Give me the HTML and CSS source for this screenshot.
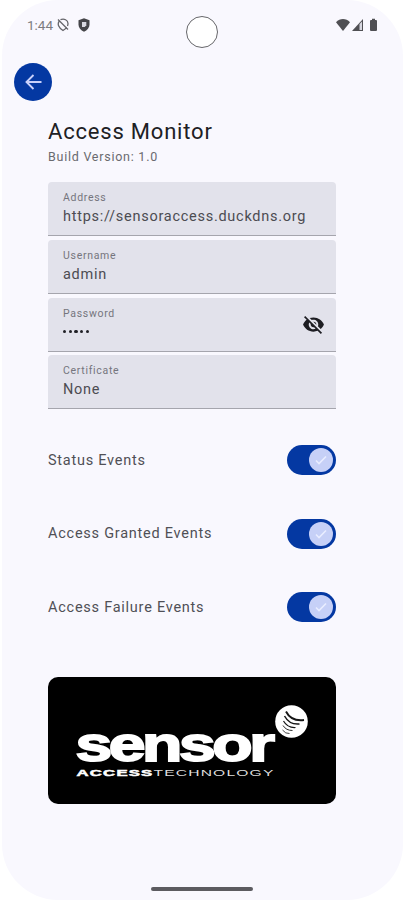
FILE: index.html
```html
<!DOCTYPE html>
<html lang="en">
<head>
<meta charset="utf-8">
<title>Access Monitor</title>
<link rel="stylesheet" href="styles.css">
</head>
<body>
<div class="phone">
  <header class="status">
    <span class="time">1:44</span>
    <svg class="st-loc" width="12" height="14" viewBox="0 0 12 14" fill="none" stroke="#66666b" stroke-width="1.300"><path d="M2.200 3.200C.2 6 1.300 9.500 6 12.500c2-1.200 3-2.200 3.700-3.500M3.500 1.700C7 .2 11 2 11 5.600c0 .8-.2 1.500-.5 2.300M1 1.500l10 10"/></svg>
    <svg class="st-shield" width="12" height="14" viewBox="0 0 12 14"><path fill="#454549" d="M6 .3l5.500 2v4.200c0 3.200-2.200 5.800-5.500 7.200C2.700 12.300.5 9.700.5 6.500V2.300z"/><path fill="#d8d8e0" d="M4 4h4.300v3.200L6.800 9H4z"/></svg>
    <span class="camera"></span>
    <svg class="st-right" width="43" height="14" viewBox="0 0 43 14" fill="#505054"><path d="M0 4.300C4-.1 10-.1 14 4.300L7 13z"/><path d="M16 13L27 1v12z"/><path fill="#d6d6df" d="M23.500 6l2.500-2.500V12h-2.500z"/><path d="M34 3q0-1 1-1h1V.7h3V2h1q1 0 1 1v9q0 1-1 1h-5q-1 0-1-1z"/></svg>
  </header>
  <button class="back" aria-label="Back"><svg width="17" height="16" viewBox="0 0 17 16" fill="none" stroke="#c8d0fa" stroke-width="1.900"><path d="M16.500 8H2M8.500 1L1.500 8l7 7"/></svg></button>
  <main>
    <h1>Access Monitor</h1>
    <p class="build">Build Version: 1.0</p>
    <section class="fields">
      <div class="field"><label>Address</label><div class="value url">https://sensoraccess.duckdns.org</div></div>
      <div class="field"><label>Username</label><div class="value">admin</div></div>
      <div class="field"><label>Password</label><div class="value dots"><i></i><i></i><i></i><i></i><i></i></div>
        <svg class="eye" width="21" height="19" viewBox="1 2 22 20" fill="#1d1d22"><path d="M12 7c2.760 0 5 2.240 5 5 0 .650-.130 1.260-.360 1.830l2.920 2.920c1.510-1.260 2.700-2.890 3.430-4.750-1.730-4.390-6-7.500-11-7.500-1.400 0-2.740.250-3.980.7l2.160 2.160C10.740 7.130 11.350 7 12 7zM2 4.270l2.280 2.280.46.46C3.080 8.300 1.780 10.020 1 12c1.730 4.390 6 7.500 11 7.500 1.550 0 3.030-.3 4.380-.84l.42.42L19.730 22 21 20.730 3.270 3 2 4.270zM7.530 9.800l1.550 1.550c-.05.21-.08.43-.08.65 0 1.660 1.340 3 3 3 .22 0 .44-.03.65-.08l1.550 1.550c-.67.33-1.410.53-2.200.53-2.760 0-5-2.240-5-5 0-.79.2-1.530.53-2.200zm4.310-.78l3.150 3.150.02-.16c0-1.660-1.340-3-3-3l-.17.010z"/></svg></div>
      <div class="field"><label>Certificate</label><div class="value">None</div></div>
    </section>
    <section class="switches">
      <div class="row"><span>Status Events</span><span class="switch"><span class="thumb"><svg width="12" height="10" viewBox="0 0 12 10"><path d="M1 5.500l3 3 7-7"/></svg></span></span></div>
      <div class="row"><span>Access Granted Events</span><span class="switch"><span class="thumb"><svg width="12" height="10" viewBox="0 0 12 10"><path d="M1 5.500l3 3 7-7"/></svg></span></span></div>
      <div class="row"><span>Access Failure Events</span><span class="switch"><span class="thumb"><svg width="12" height="10" viewBox="0 0 12 10"><path d="M1 5.500l3 3 7-7"/></svg></span></span></div>
    </section>
    <svg class="brand" width="288" height="127" viewBox="0 0 288 127">
      <rect width="288" height="127" rx="10"/>
      <text class="wordmark" x="27.500" y="83.500" textLength="196" lengthAdjust="spacingAndGlyphs">sensor</text>
      <text class="tag heavy" x="28.500" y="98.500" textLength="77" lengthAdjust="spacingAndGlyphs">ACCESS</text>
      <text class="tag light" x="105.500" y="98.500" textLength="121" lengthAdjust="spacingAndGlyphs">TECHNOLOGY</text>
      <circle cx="243.500" cy="44.500" r="16.300" fill="#fff"/>
      <g fill="none" stroke="#161616"><path stroke-width="1.900" d="M238 34.500q5 10 18 8.500"/><path stroke-width="1.500" d="M236.500 39q5 9 15 8"/><path stroke-width="1.200" d="M235.500 44q4 7 12 6.500"/><path stroke-width=".9" d="M235 48.500q3 5 9.500 5"/><path stroke-width=".8" d="M234.500 53q3 4 7 3.500"/></g>
    </svg>
  </main>
  <div class="home"></div>
</div>
</body>
</html>
```
FILE: styles.css
```css
* { box-sizing: border-box; }
body { margin: 0; background: #fff; font-family: Roboto, sans-serif; }
.phone { position: relative; width: 401px; height: 900px; margin-left: 2px; padding-left: 46px; background: #f9f8fe; border-radius: 56px; overflow: hidden; }
.status { height: 63px; margin-left: -46px; padding: 18px 24px 0 25px; display: flex; align-items: flex-start; color: #7c7c80; }
.time { font-size: 13.500px; line-height: 14px; letter-spacing: 0; width: 30px; }
.st-shield { margin-left: 9px; }
.st-right { margin-left: auto; }
.camera { position: absolute; left: 184px; top: 16px; width: 32px; height: 32px; border: 1px solid #66666a; border-radius: 50%; background: #fff; }
.back { display: flex; align-items: center; justify-content: center; width: 38px; height: 38px; margin-left: -34px; padding: 0; border: 0; border-radius: 50%; background: #0438a2; }
main { width: 288px; padding-top: 17px; display: flex; flex-direction: column; }
h1 { margin: 0; font-size: 22px; line-height: 28px; font-weight: 400; letter-spacing: .8px; color: #202024; white-space: nowrap; }
.build { margin: 2px 0 0; font-size: 12.500px; line-height: 18px; letter-spacing: .75px; color: #6a6a6f; }
.fields { margin-top: 16.400px; display: grid; gap: 3.700px; }
.field { position: relative; height: 54px; padding: 9px 15px 0; background: #e2e2eb; border-bottom: 1.500px solid #a5a5ad; border-radius: 4px 4px 0 0; }
label { display: block; font-size: 10.500px; line-height: 14px; letter-spacing: .7px; color: #75757d; }
.value { margin-top: 2px; font-size: 14.500px; line-height: 19px; letter-spacing: .73px; color: #4c4c52; white-space: nowrap; }
.dots { display: flex; gap: 2.500px; padding-top: 7px; }
.dots i { width: 3.200px; height: 3.200px; border-radius: 50%; background: #202026; }
.eye { position: absolute; right: 12px; top: 17px; }
.switches { margin-top: 13.600px; }
.row { height: 73.700px; display: flex; align-items: center; justify-content: space-between; font-size: 14.500px; letter-spacing: .75px; color: #505056; }
.row > span:first-child { padding-top: .5px; }
.switch { width: 49px; height: 30px; padding: 3px; border-radius: 15px; background: #0438a2; display: flex; justify-content: flex-end; }
.thumb { width: 24px; height: 24px; border-radius: 50%; background: #c6d0f7; display: flex; align-items: center; justify-content: center; }
.thumb path { fill: none; stroke: #e9edff; stroke-width: 1.600; }
.brand { display: block; margin-top: 33px; }
.wordmark { font: 700 48px "Liberation Sans", sans-serif; letter-spacing: -2.500px; fill: #fff; stroke: #fff; stroke-width: 1.800px; }
.tag { font: 400 9.500px "Liberation Sans", sans-serif; letter-spacing: .7px; fill: #ddd; }
.heavy { font-weight: 700; fill: #fff; stroke: #fff; stroke-width: .5px; }
.home { position: absolute; left: 149px; top: 887px; width: 102px; height: 4px; border-radius: 2px; background: #5c5b60; }
```
